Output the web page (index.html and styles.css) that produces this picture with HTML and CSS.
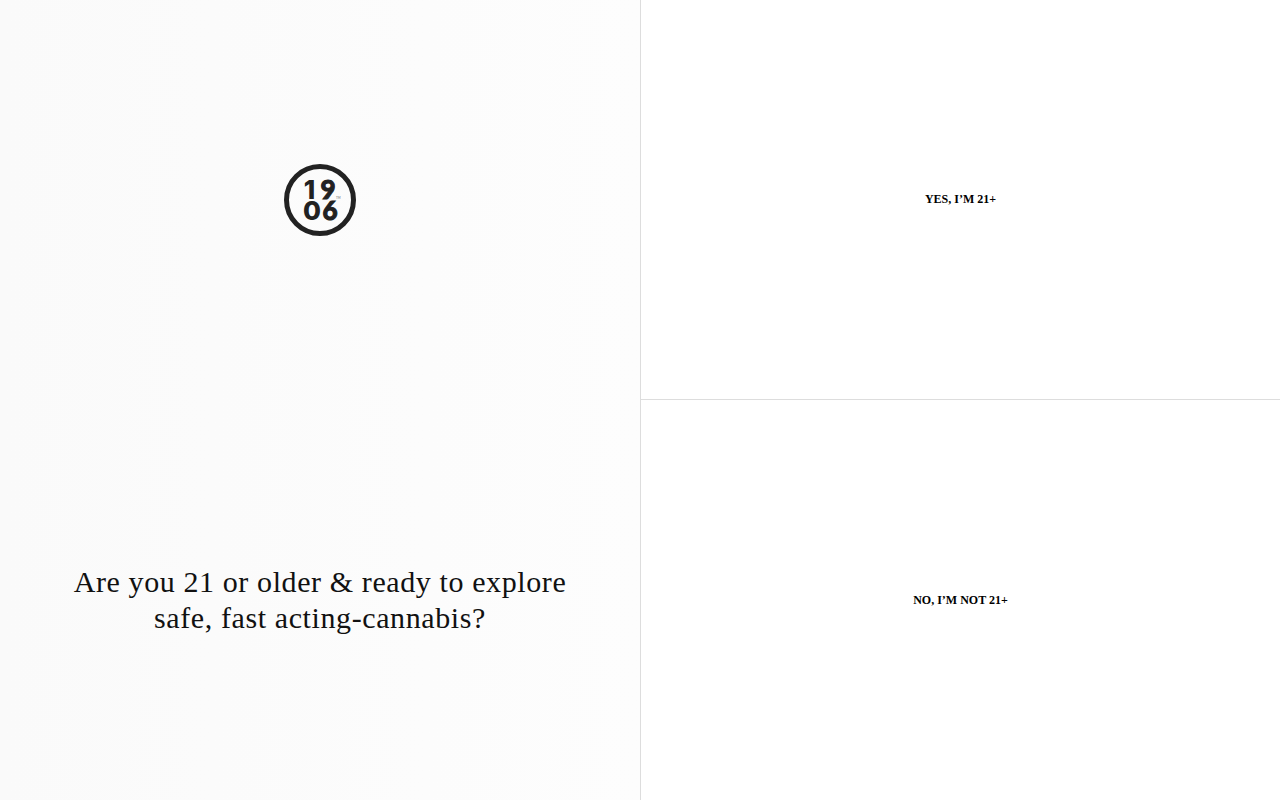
FILE: index.html
```html
<!DOCTYPE html>
<html lang="en">
<head>
    <meta charset="UTF-8">
    <meta name="viewport" content="width=device-width, initial-scale=1.0">
    <title>1906</title>
    <link rel="stylesheet" href="styles.css">
</head>
<body>
    <main class="age-gate">
        <section class="intro">
            <div class="logo-wrap">
                <svg class="logo" viewBox="0 0 72 72" role="img" aria-label="1906">
                    <circle cx="36" cy="36" r="33.5" fill="none" stroke="#222" stroke-width="5"/>
                    <text class="logo-digits"><tspan x="25.5" y="35">1</tspan><tspan class="logo-slant" x="44" y="35">9</tspan><tspan x="28" y="56">0</tspan><tspan class="logo-slant" x="46" y="56">6</tspan></text>
                    <text class="logo-tm" x="52" y="35">TM</text>
                </svg>
            </div>
            <div class="question-wrap">
                <h1 class="question">Are you 21 or older &amp; ready to explore safe, fast acting-cannabis?</h1>
            </div>
        </section>
        <section class="answers">
            <button class="answer" type="button">Yes, I’m 21+</button>
            <button class="answer" type="button">No, I’m not 21+</button>
        </section>
    </main>
</body>
</html>
```

FILE: styles.css
```css
* {
    box-sizing: border-box;
}

body {
    margin: 0;
    background: #fff;
    color: #111;
    font-family: "Liberation Serif", "Times New Roman", serif;
}

.age-gate {
    display: grid;
    grid-template-columns: 1fr 1fr;
    min-height: 100vh;
}

.intro {
    display: grid;
    grid-template-rows: 1fr 1fr;
    background: linear-gradient(90deg, #fafafa, #fdfdfd);
}

.logo-wrap,
.question-wrap {
    display: flex;
    align-items: center;
    justify-content: center;
}

.logo {
    width: 72px;
    height: 72px;
}

.logo-digits {
    fill: #222;
    font-family: Inter, sans-serif;
    font-size: 26px;
    font-weight: 800;
    text-anchor: middle;
}

/* Lato has the straight tail on 6 and 9 */
.logo-slant {
    font-family: Lato, sans-serif;
    font-weight: 900;
    stroke: #222;
    stroke-width: 1px;
}

.logo-tm {
    fill: #666;
    font-family: Lato, sans-serif;
    font-size: 3px;
}

.question-wrap {
    padding: 0 60px;
}

.question {
    margin: 0;
    font-size: 30px;
    font-weight: 400;
    line-height: 36px;
    letter-spacing: 0.02em;
    text-align: center;
}

.answers {
    display: grid;
    grid-template-rows: 1fr 1fr;
    border-left: 1px solid #ddd;
}

.answer {
    padding: 0;
    border: 0;
    background: #fff;
    color: #000;
    font-family: inherit;
    font-size: 12px;
    font-weight: 700;
    text-transform: uppercase;
    cursor: pointer;
}

.answer:first-child {
    border-bottom: 1px solid #ddd;
}
```
